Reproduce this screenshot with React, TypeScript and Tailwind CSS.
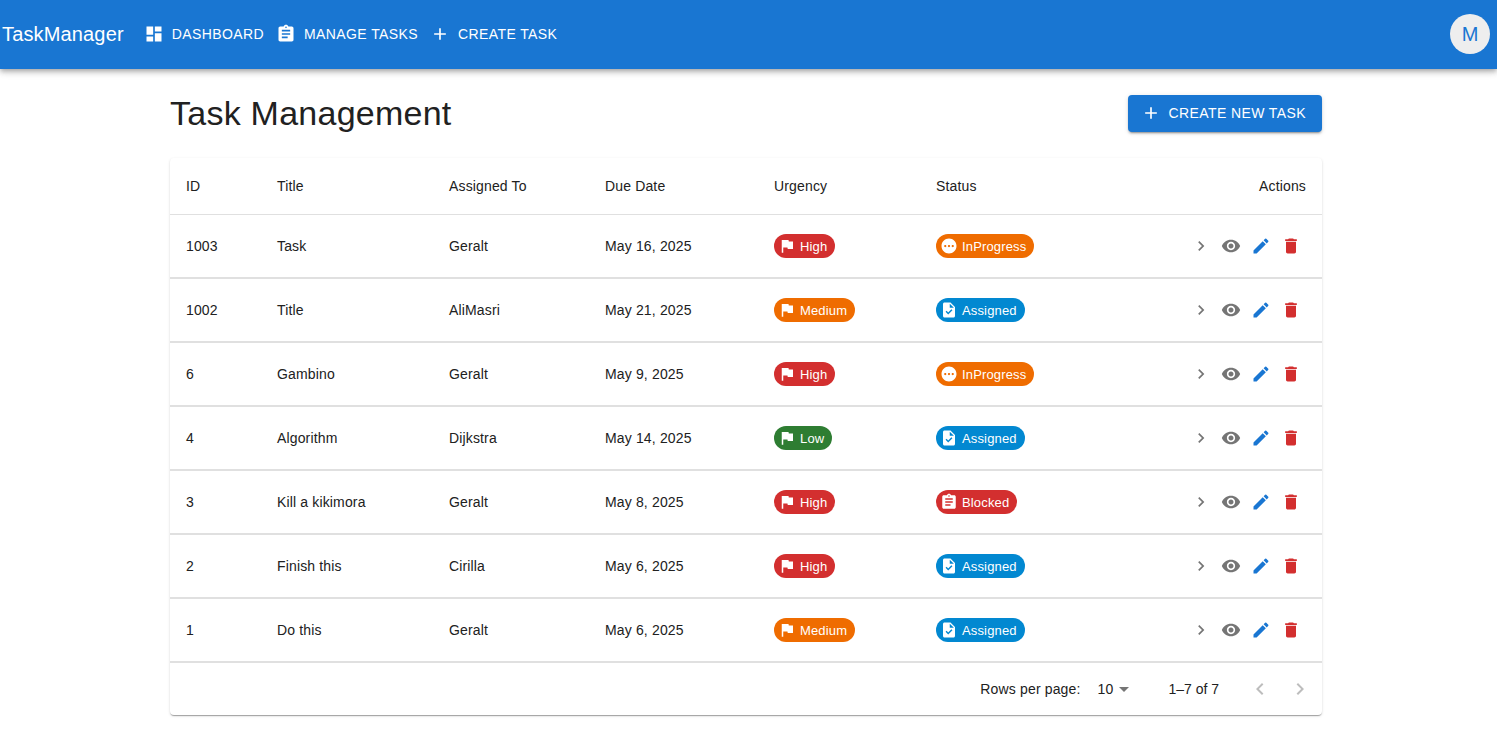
import React from "react";

const P = {
  dashboard: "M3 13h8V3H3v10zm0 8h8v-6H3v6zm10 0h8V11h-8v10zm0-18v6h8V3h-8z",
  assignment: "M19 3h-4.18C14.4 1.84 13.3 1 12 1c-1.3 0-2.4.84-2.82 2H5c-1.1 0-2 .9-2 2v14c0 1.1.9 2 2 2h14c1.1 0 2-.9 2-2V5c0-1.1-.9-2-2-2zm-7 0c.55 0 1 .45 1 1s-.45 1-1 1-1-.45-1-1 .45-1 1-1zm2 14H7v-2h7v2zm3-4H7v-2h10v2zm0-4H7V7h10v2z",
  add: "M19 13h-6v6h-2v-6H5v-2h6V5h2v6h6v2z",
  flag: "M14.4 6 14 4H5v17h2v-7h5.6l.4 2h7V6z",
  pending: "M12 2C6.48 2 2 6.48 2 12s4.48 10 10 10 10-4.48 10-10S17.52 2 12 2zM7 13.5c-.83 0-1.5-.67-1.5-1.5s.67-1.5 1.5-1.5 1.5.67 1.5 1.5-.67 1.5-1.5 1.5zm5 0c-.83 0-1.5-.67-1.5-1.5s.67-1.5 1.5-1.5 1.5.67 1.5 1.5-.67 1.5-1.5 1.5zm5 0c-.83 0-1.5-.67-1.5-1.5s.67-1.5 1.5-1.5 1.5.67 1.5 1.5-.67 1.5-1.5 1.5z",
  task: "M14 2H6c-1.1 0-1.99.9-1.99 2L4 20c0 1.1.89 2 1.99 2H18c1.1 0 2-.9 2-2V8l-6-6zm-3.06 16L7.4 14.46l1.41-1.41 2.12 2.12 4.24-4.24 1.41 1.41L10.94 18zM13 9V3.5L18.5 9H13z",
  right: "M10 6 8.59 7.41 13.17 12l-4.58 4.59L10 18l6-6z",
  left: "M15.41 7.41 14 6l-6 6 6 6 1.41-1.41L10.83 12z",
  eye: "M12 4.5C7 4.5 2.73 7.61 1 12c1.73 4.39 6 7.5 11 7.5s9.27-3.11 11-7.5c-1.73-4.39-6-7.5-11-7.5zM12 17c-2.76 0-5-2.24-5-5s2.24-5 5-5 5 2.24 5 5-2.24 5-5 5zm0-8c-1.66 0-3 1.34-3 3s1.34 3 3 3 3-1.34 3-3-1.34-3-3-3z",
  edit: "M3 17.25V21h3.75L17.81 9.94l-3.75-3.75L3 17.25zM20.71 7.04c.39-.39.39-1.02 0-1.41l-2.34-2.34a.9959.9959 0 0 0-1.41 0l-1.83 1.83 3.75 3.75 1.83-1.83z",
  trash: "M6 19c0 1.1.9 2 2 2h8c1.1 0 2-.9 2-2V7H6v12zM19 4h-3.5l-1-1h-5l-1 1H5v2h14V4z",
  drop: "m7 10 5 5 5-5z",
};

function Icon({ d, className }: { d: string; className: string }) {
  return (
    <svg viewBox="0 0 24 24" fill="currentColor" className={className} aria-hidden="true">
      <path d={d} />
    </svg>
  );
}

function NavItem({ d, label }: { d: string; label: string }) {
  return (
    <div className="flex items-center px-[8px] h-[36px]">
      <Icon d={d} className="w-5 h-5 mr-[8px] ml-[-4px] shrink-0" />
      <span className="text-[14px] leading-[24px] tracking-[0.4px]">{label}</span>
    </div>
  );
}

function Chip({ d, label, color }: { d: string; label: string; color: string }) {
  return (
    <span className={`flex w-fit items-center h-6 rounded-full text-white text-[13px] tracking-[0.15px] ${color}`}>
      <Icon d={d} className="w-[18px] h-[18px] ml-[4px] mr-[-4px] shrink-0" />
      <span className="px-[8px] leading-[24px] pt-[1px]">{label}</span>
    </span>
  );
}

const urgency: Record<string, string> = { High: "bg-[#d32f2f]", Medium: "bg-[#ef6c00]", Low: "bg-[#2e7d32]" };
const status: Record<string, [string, string]> = {
  InProgress: [P.pending, "bg-[#ef6c00]"],
  Assigned: [P.task, "bg-[#0288d1]"],
  Blocked: [P.assignment, "bg-[#d32f2f]"],
};

const rows = [
  ["1003", "Task", "Geralt", "May 16, 2025", "High", "InProgress"],
  ["1002", "Title", "AliMasri", "May 21, 2025", "Medium", "Assigned"],
  ["6", "Gambino", "Geralt", "May 9, 2025", "High", "InProgress"],
  ["4", "Algorithm", "Dijkstra", "May 14, 2025", "Low", "Assigned"],
  ["3", "Kill a kikimora", "Geralt", "May 8, 2025", "High", "Blocked"],
  ["2", "Finish this", "Cirilla", "May 6, 2025", "High", "Assigned"],
  ["1", "Do this", "Geralt", "May 6, 2025", "Medium", "Assigned"],
];

const th = "h-[57px] px-4 border-b border-[#e0e0e0] font-normal text-left text-[14px] tracking-[0.15px]";
const td = "h-[64px] px-4 border-b-2 border-[#e0e0e0] text-[14px] tracking-[0.15px]";

export default function App() {
  return (
    <div className="min-h-[743px] bg-white text-[#212121] font-['Liberation_Sans',Arial,sans-serif]">
      <header className="h-[69px] bg-[#1976d2] text-white flex items-center pl-[2px] pr-[7px] pb-[1px] shadow-[0_2px_4px_-1px_rgba(0,0,0,0.2),0_4px_5px_0_rgba(0,0,0,0.14),0_1px_10px_0_rgba(0,0,0,0.12)]">
        <div className="text-[20px] leading-[32px] tracking-[0.15px] mr-[16px]">TaskManager</div>
        <NavItem d={P.dashboard} label="DASHBOARD" />
        <NavItem d={P.assignment} label="MANAGE TASKS" />
        <NavItem d={P.add} label="CREATE TASK" />
        <div className="ml-auto w-10 h-10 rounded-full bg-[#eeeeee] text-[#1976d2] text-[20px] flex items-center justify-center">M</div>
      </header>
      <main className="ml-[170px] w-[1152px]">
        <div className="flex items-center justify-between h-[89px] pb-[1px]">
          <h1 className="text-[34px] leading-[42px] tracking-[0.25px]">Task Management</h1>
          <button className="flex items-center h-[37px] pl-[13px] pr-[16px] rounded-[4px] bg-[#1976d2] text-white text-[14px] tracking-[0.4px] shadow-[0_3px_1px_-2px_rgba(0,0,0,0.2),0_2px_2px_0_rgba(0,0,0,0.14),0_1px_5px_0_rgba(0,0,0,0.12)]">
            <Icon d={P.add} className="w-5 h-5 mr-[8px]" />
            CREATE NEW TASK
          </button>
        </div>
        <div className="rounded-[4px] bg-white shadow-[0_2px_1px_-1px_rgba(0,0,0,0.2),0_1px_1px_0_rgba(0,0,0,0.14),0_1px_3px_0_rgba(0,0,0,0.12)]">
          <table className="w-full table-fixed border-separate border-spacing-0">
            <colgroup>
              <col className="w-[91px]" />
              <col className="w-[172px]" />
              <col className="w-[156px]" />
              <col className="w-[169px]" />
              <col className="w-[162px]" />
              <col />
              <col className="w-[240px]" />
            </colgroup>
            <thead>
              <tr>
                <th className={th}>ID</th>
                <th className={th}>Title</th>
                <th className={th}>Assigned To</th>
                <th className={th}>Due Date</th>
                <th className={th}>Urgency</th>
                <th className={th}>Status</th>
                <th className="h-[57px] px-4 border-b border-[#e0e0e0] font-normal text-right text-[14px] tracking-[0.15px]">Actions</th>
              </tr>
            </thead>
            <tbody>
              {rows.map((r) => (
                <tr key={r[0]}>
                  <td className={td}>{r[0]}</td>
                  <td className={td}>{r[1]}</td>
                  <td className={td}>{r[2]}</td>
                  <td className={td}>{r[3]}</td>
                  <td className={td}>
                    <Chip d={P.flag} label={r[4]} color={urgency[r[4]]} />
                  </td>
                  <td className={td}>
                    <Chip d={status[r[5]][0]} label={r[5]} color={status[r[5]][1]} />
                  </td>
                  <td className={td}>
                    <div className="flex items-center justify-end gap-[10px] pr-[5px]">
                      <Icon d={P.right} className="w-5 h-5 text-[#757575]" />
                      <Icon d={P.eye} className="w-5 h-5 text-[#757575]" />
                      <Icon d={P.edit} className="w-5 h-5 text-[#1976d2]" />
                      <Icon d={P.trash} className="w-5 h-5 text-[#d32f2f]" />
                    </div>
                  </td>
                </tr>
              ))}
            </tbody>
          </table>
          <div className="h-[52px] flex items-center justify-end text-[14px] tracking-[0.15px] pr-[10px]">
            <span>Rows per page:</span>
            <span className="ml-[17px]">10</span>
            <Icon d={P.drop} className="w-6 h-6 text-[#757575] ml-[-1px]" />
            <span className="ml-[32px] tracking-normal">1–7 of 7</span>
            <Icon d={P.left} className="w-6 h-6 text-[#bdbdbd] ml-[29px]" />
            <Icon d={P.right} className="w-6 h-6 text-[#bdbdbd] ml-[16px]" />
          </div>
        </div>
      </main>
    </div>
  );
}
